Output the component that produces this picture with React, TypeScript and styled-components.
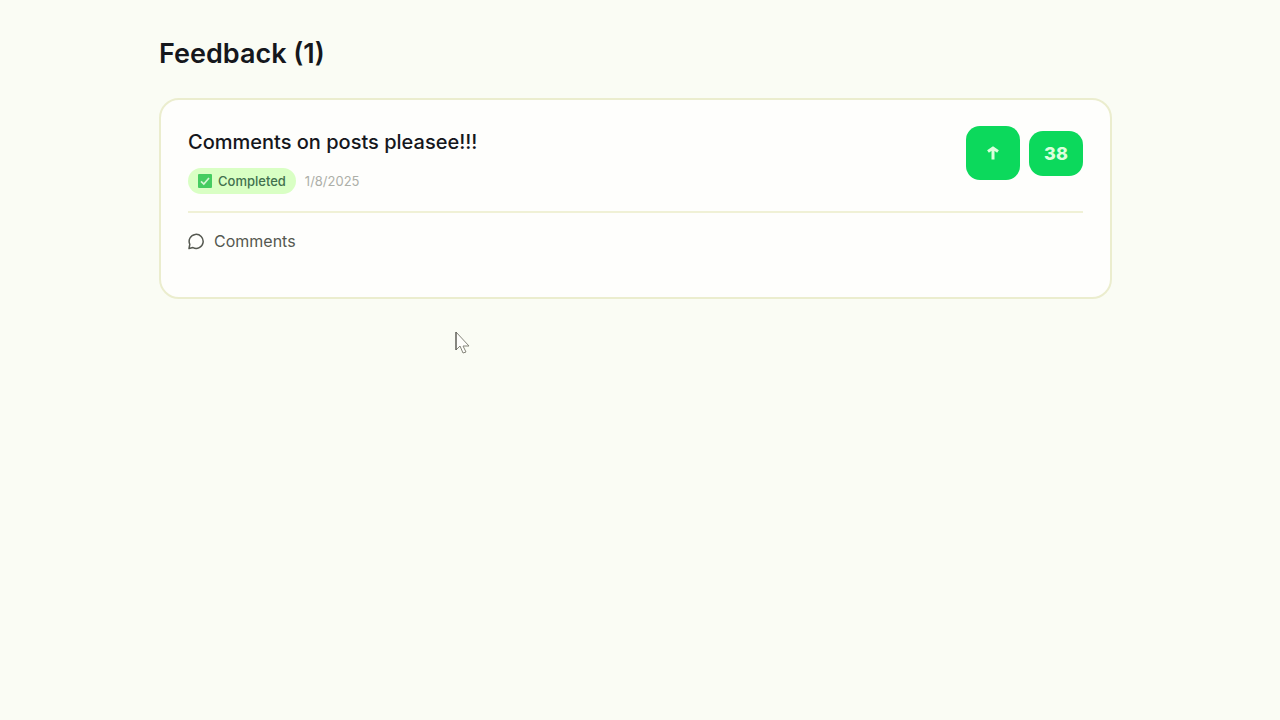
import React from "react";
import styled, { createGlobalStyle } from "styled-components";

const GlobalStyle = createGlobalStyle`
  *, *::before, *::after { box-sizing: border-box; }
  body {
    margin: 0;
    background: #fafcf4;
    color: #15171c;
    font-family: Inter, "Liberation Sans", sans-serif;
  }
  button { font: inherit; cursor: pointer; }
`;

const Page = styled.main`
  position: relative;
  min-height: 100vh;
  padding: 36px 168px 36px 159px;

  @media (max-width: 900px) {
    padding: 24px;
  }
`;

const PageTitle = styled.h1`
  margin: 0 0 26px;
  font-size: 27px;
  line-height: 36px;
  font-weight: 600;
`;

const Card = styled.article`
  padding: 27px 27px 44px;
  background: #fefefc;
  border: 2px solid #ebedce;
  border-radius: 20px;
`;

const CardHeader = styled.header`
  display: flex;
  justify-content: space-between;
  gap: 24px;
  padding-bottom: 17px;
  border-bottom: 2px solid #f0f1d6;
`;

const Summary = styled.div`
  display: flex;
  flex-direction: column;
  gap: 10px;
`;

const PostTitle = styled.h2`
  margin: 0;
  font-size: 20px;
  line-height: 31px;
  font-weight: 500;
`;

const Meta = styled.div`
  display: flex;
  align-items: center;
  gap: 9px;
`;

const Status = styled.span`
  display: inline-flex;
  align-items: center;
  gap: 6px;
  height: 26px;
  padding: 0 10px;
  border-radius: 13px;
  background: #d9ffc4;
  color: #42704e;
  font-size: 13px;
  font-weight: 500;
`;

const PostDate = styled.time`
  color: #adafa8;
  font-size: 13px;
`;

const Votes = styled.div`
  display: flex;
  align-items: center;
  gap: 9px;
  height: 52px;
`;

const UpvoteButton = styled.button`
  display: grid;
  place-items: center;
  width: 54px;
  height: 54px;
  padding: 0;
  border: 0;
  border-radius: 14px;
  background: #0cd95c;
  color: #dcffdc;
`;

const VoteCount = styled.span`
  display: grid;
  place-items: center;
  width: 54px;
  height: 45px;
  border-radius: 14px;
  background: #0cd95c;
  color: #dcffdc;
  font-size: 18px;
  font-weight: 800;
`;

const CommentsButton = styled.button`
  display: flex;
  align-items: center;
  gap: 9px;
  margin-top: 16px;
  padding: 0;
  border: 0;
  background: none;
  color: #555850;
  font-size: 16px;
  line-height: 24px;
`;

const Pointer = styled.svg`
  position: absolute;
  top: 331px;
  left: 455px;
`;

export default function App() {
  return (
    <>
      <GlobalStyle />
      <Page>
        <PageTitle>Feedback (1)</PageTitle>
        <Card>
          <CardHeader>
            <Summary>
              <PostTitle>Comments on posts pleasee!!!</PostTitle>
              <Meta>
                <Status>
                  <svg width="14" height="14" viewBox="0 0 14 14" aria-hidden="true">
                    <rect width="14" height="14" rx="1" fill="#45cc61" />
                    <path d="M3 7.4 5.8 10 11 4" fill="none" stroke="#d5f7d4" strokeWidth="1.7" />
                  </svg>
                  Completed
                </Status>
                <PostDate dateTime="2025-01-08">1/8/2025</PostDate>
              </Meta>
            </Summary>
            <Votes>
              <UpvoteButton type="button" aria-label="Upvote">
                <svg width="12" height="14" viewBox="0 0 12 14" fill="none" stroke="currentColor" aria-hidden="true">
                  <path d="M6 13.5V2M1 5.5 6 2l5 3.5" strokeWidth="3" />
                </svg>
              </UpvoteButton>
              <VoteCount>38</VoteCount>
            </Votes>
          </CardHeader>
          <CommentsButton type="button">
            <svg width="17" height="18" viewBox="0 0 17 18" fill="none" aria-hidden="true">
              <path
                d="M1 16.500 1.800 12.300A7 7 0 1 1 5 15.600L1 16.500Z"
                stroke="currentColor"
                strokeWidth="1.500"
                strokeLinecap="round"
                strokeLinejoin="round"
              />
            </svg>
            Comments
          </CommentsButton>
        </Card>
        <Pointer width="15" height="24" viewBox="0 0 15 24" aria-hidden="true">
          <path
            d="M1 1v18l4-4 3 7 3-1-3-6h6Z"
            fill="#fefefb"
            stroke="#85857a"
            strokeWidth="1"
          />
          <path d="M1 1v18" stroke="#4d4d46" />
        </Pointer>
      </Page>
    </>
  );
}
